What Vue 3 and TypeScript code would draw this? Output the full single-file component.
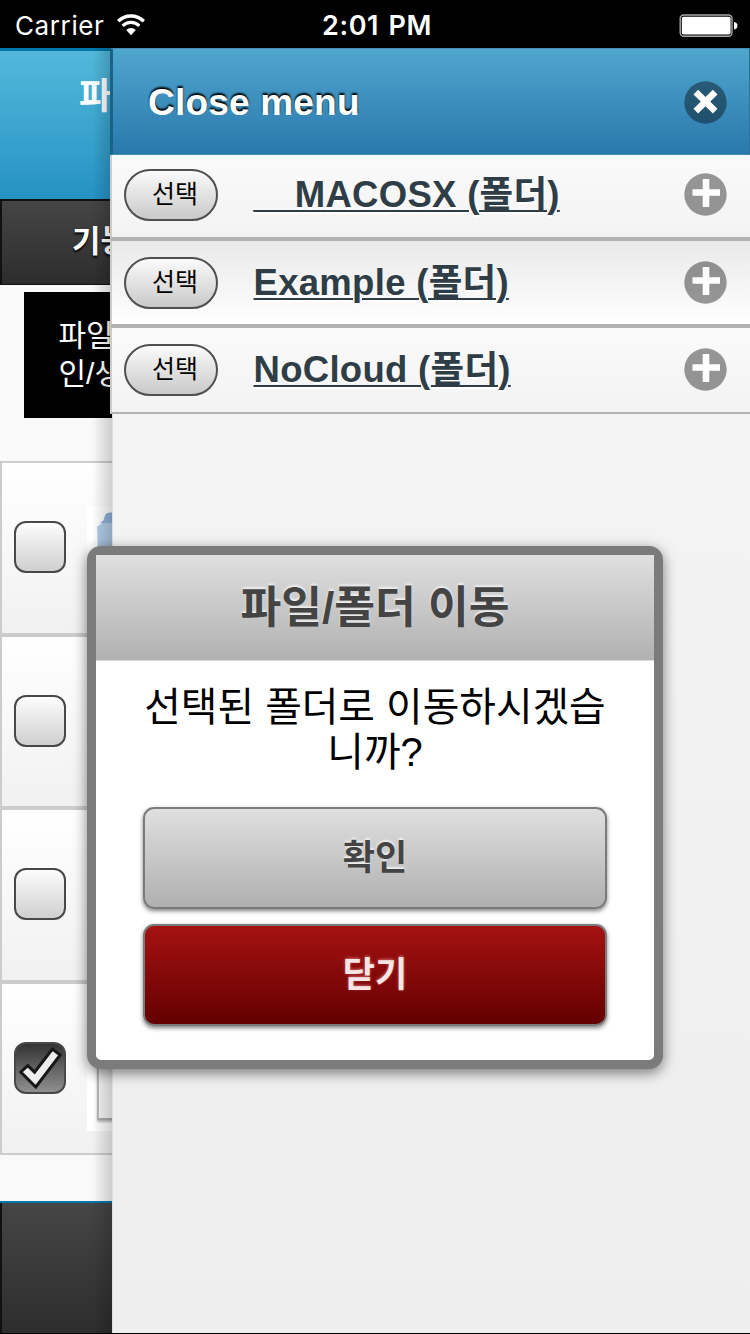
<script setup lang="ts">
interface Folder { name: string; alt: boolean }
interface FileRow { id: number; checked: boolean; thumb: 'cloud' | 'doc' | 'none' }

const folders: Folder[] = [
  { name: '__MACOSX (폴더)', alt: false },
  { name: 'Example (폴더)', alt: true },
  { name: 'NoCloud (폴더)', alt: false },
]
const files: FileRow[] = [
  { id: 1, checked: false, thumb: 'cloud' },
  { id: 2, checked: false, thumb: 'none' },
  { id: 3, checked: false, thumb: 'none' },
  { id: 4, checked: true, thumb: 'doc' },
]
</script>

<template>
  <div class="screen">
    <div class="status">
      <div class="carrier">
        <span class="carrier-name">Carrier</span>
        <svg class="wifi" width="30" height="22" viewBox="0 0 30 22" fill="none">
          <path d="M2.2 7.2 A18.2 18.2 0 0 1 27.8 7.2" stroke="#fff" stroke-width="3.4" />
          <path d="M6.7 11.8 A11.8 11.8 0 0 1 23.3 11.8" stroke="#fff" stroke-width="3.2" />
          <path d="M15 21.2 L10.2 16.1 A6.8 6.8 0 0 1 19.8 16.1 Z" fill="#fff" />
        </svg>
      </div>
      <span class="time">2:01 PM</span>
      <svg class="battery" width="60" height="24" viewBox="0 0 60 24">
        <rect x="1.2" y="1" width="51.8" height="21.2" rx="3.5" fill="none" stroke="#aaa" stroke-width="1.4" />
        <rect x="2.8" y="2.8" width="48.8" height="17.6" rx="1.6" fill="#fff" />
        <path d="M55 8 Q58.5 8.6 58.5 11.7 Q58.5 14.8 55 15.6 Z" fill="#fff" />
      </svg>
    </div>

    <div class="body">
      <div class="under">
        <div class="app-head"><span>파일</span></div>
        <div class="nav"><span>기능</span></div>
        <div class="tip"><span>파일</span><span>인/생성</span></div>
        <div class="files">
          <div v-for="f in files" :key="f.id" class="file">
            <div class="check" :class="{ on: f.checked }">
              <svg v-if="f.checked" width="48" height="48" viewBox="0 0 48 48">
                <path d="M4.8 28 L11.8 21.6 L18.6 28.2 L36.4 5 L44.2 11 L19.8 43 Z" fill="#eee" stroke="#181818" stroke-width="3" />
              </svg>
            </div>
            <div v-if="f.thumb !== 'none'" class="thumb" :class="f.thumb">
              <svg v-if="f.thumb === 'cloud'" width="26" height="80" viewBox="0 0 26 80">
                <path d="M10 20.5 L15.5 17 L18.5 8.5 Q19.5 6.5 26 6.5 V80 H12 Z" fill="#b1cce8" />
                <path d="M12.5 17 L16.5 14.5 L18.5 8.5 Q19.5 6.5 26 6.5 V17 H12.5 Z" fill="#8fb2da" />
              </svg>
              <div v-else class="paper"></div>
            </div>
          </div>
        </div>
        <div class="foot"></div>
      </div>

      <div class="panel">
        <div class="panel-head">
          <span>Close menu</span>
          <svg width="43" height="43" viewBox="0 0 43 43">
            <circle cx="21.5" cy="21.5" r="21.2" fill="#000" fill-opacity=".4" />
            <path d="M11.8 11.2 L31.2 30.2 M31.2 11.2 L11.8 30.2" stroke="#fff" stroke-width="6.6" />
          </svg>
        </div>
        <div v-for="f in folders" :key="f.name" class="folder" :class="{ alt: f.alt }">
          <button class="pick">선택</button>
          <a class="name">{{ f.name }}</a>
          <svg width="43" height="43" viewBox="0 0 43 43">
            <circle cx="21.5" cy="21.5" r="21.2" fill="#000" fill-opacity=".4" />
            <path d="M8.5 19.5 H36 M22 6 V34" stroke="#fff" stroke-width="6.6" />
          </svg>
        </div>
      </div>
    </div>

    <div class="modal">
      <div class="modal-title"><span>파일/폴더 이동</span></div>
      <div class="modal-body">
        <p>선택된 폴더로 이동하시겠습<br>니까?</p>
        <button class="btn"><span>확인</span></button>
        <button class="btn red"><span>닫기</span></button>
      </div>
    </div>
  </div>
</template>

<style>
body { margin: 0; background: #000; }
</style>

<style scoped>
* { box-sizing: border-box; }
.screen {
  position: relative; width: 750px; height: 1334px; overflow: hidden; background: #000;
  display: flex; flex-direction: column;
  font-family: "Liberation Sans", "Noto Sans CJK KR", sans-serif;
}
button { font-family: inherit; margin: 0; padding: 0; }
.status {
  height: 48px; flex: none; display: grid; grid-template-columns: 1fr auto 1fr; align-items: center;
  padding: 2px 11px 0 15px; color: #fff; font-family: Inter, Roboto, sans-serif; font-size: 26px;
}
.carrier { display: flex; align-items: center; gap: 12px; }
.carrier-name { font-weight: 400; letter-spacing: .6px; }
.time { font-weight: 600; font-size: 27px; letter-spacing: .6px; word-spacing: 2px; }
.battery { justify-self: end; margin-top: 2px; }

.body { height: 1285px; flex: none; display: flex; }
.under {
  width: 112px; flex: none; overflow: hidden; background: #f9f9f9; position: relative;
  display: flex; flex-direction: column;
}
.under::after {
  content: ""; position: absolute; top: 0; right: 0; bottom: 0; width: 20px;
  background: linear-gradient(90deg, rgba(0,0,0,0), rgba(0,0,0,.07) 40%, rgba(0,0,0,.18));
}
.app-head {
  height: 151px; flex: none; border-top: 3px solid #0076aa;
  background: linear-gradient(#53b8da, #2592c5); padding: 22px 0 0 79px;
  white-space: nowrap; color: #fff; font-weight: 700; font-size: 36px; line-height: 48px;
}
.nav {
  height: 86px; flex: none; border: 2px solid #111; border-bottom: 1px solid #111; border-right: 0;
  background: linear-gradient(#454545, #2d2d2d); padding: 18px 0 0 70px; white-space: nowrap;
  color: #fff; font-weight: 700; font-size: 31px; line-height: 46px; text-shadow: 0 2px 2px #000;
}
.tip {
  margin: 7px 0 0 23.5px; width: 400px; height: 126px; flex: none; background: #000; color: #fff;
  padding: 25px 0 0 35px; display: flex; flex-direction: column; font-size: 30px; line-height: 38px;
}
.files { margin-top: 43px; flex: none; width: 400px; }
.file {
  height: 173.5px; border: 2px solid #ccc; background: linear-gradient(#fff, #f1f1f1);
  display: flex; align-items: center; padding: 0 0 1px 12px;
}
.check {
  width: 52px; height: 52px; flex: none; border: 2px solid #484848; border-radius: 12px;
  background: linear-gradient(#fdfdfd, #cfcfcf);
}
.check.on { background: linear-gradient(#333, #909090); }
.check svg { display: block; }
.thumb { width: 200px; height: 80px; margin-left: 21px; background: #fff; align-self: flex-start; margin-top: 43px; }
.thumb.doc { height: 104px; padding-left: 10px; }
.paper {
  height: 93px; width: 150px; background: #f5f5f5; border: 2px solid #bbb;
  box-shadow: 0 2px 2px #bbb; border-bottom-color: #aaa;
}
.foot { margin-top: 46px; height: 132px; flex: none; border-top: 2px solid #0076aa; background: linear-gradient(#454545, #2d2d2d); display: flex; }
.foot::before { content: ""; width: 2px; background: #111; }

.panel {
  flex: 1; position: relative; background: linear-gradient(#f6f6f6, #eee); border-left: 1px solid #ddd;
  display: flex; flex-direction: column;
}
.panel-head {
  height: 107px; flex: none; margin-left: -3px; border: 1px solid #458db5; border-left: 3px solid #1b6288; border-right-color: #2a7396;
  background: linear-gradient(#4fa6ce, #2a78ac);
  display: flex; align-items: center; justify-content: space-between; padding: 1px 22px 0 35px;
  color: #fff; font-weight: 700; font-size: 37px; letter-spacing: .2px; text-shadow: 0 -2px 2px #000;
}
.panel-head span { padding-top: 2px; }
.folder {
  height: 87.3px; flex: none; margin-left: -3px; border: 2px solid #b2b2b2; border-width: 2px 0 2px 2px; border-left-color: #ccc;
  background: linear-gradient(#fafafa, #f3f3f3);
  display: flex; align-items: center; padding: 0 23px 0 12px;
}
.folder:nth-child(2) { border-top: 0; height: 84px; padding-bottom: 3px; }
.folder.alt { background: linear-gradient(#e9e9e9, #fff); }
.pick {
  width: 94px; height: 52px; border: 2px solid #505050; border-radius: 26px; background: linear-gradient(#fbfbfb, #c9c9c9);
  color: #000; font-size: 25px; line-height: 34px; padding: 0 0 2px 8px; white-space: nowrap;
}
.name {
  flex: 1; margin-left: 35.5px; color: #2f3e46; font-weight: 700; font-size: 36.5px; letter-spacing: .3px; line-height: 46px; white-space: nowrap; padding-top: 1px;
  text-decoration: underline; text-decoration-thickness: 2px; text-underline-offset: 3px; text-shadow: 0 2px 0 #fff;
}

.modal {
  position: absolute; left: 87px; top: 546px; width: 576px; height: 523px;
  border: 9px solid #7b7b7b; border-radius: 14px; background: #fff;
  box-shadow: 0 4px 14px rgba(0,0,0,.5);
}
.modal-title {
  height: 106px; background: linear-gradient(#dfdfdf, #b1b1b1); border-bottom: 1px solid #ddd;
  display: flex; justify-content: center; padding-top: 22px;
  color: #444; font-weight: 700; font-size: 44.3px; line-height: 62px; text-shadow: 0 -2px 2px #eee;
}
.modal-body { padding: 24px 47px; display: flex; flex-direction: column; }
p { margin: 0 -10px 31.5px; text-align: center; font-size: 39.8px; line-height: 45px; color: #000; white-space: nowrap; }
.btn {
  height: 102px; flex: none; border: 2px solid #7b7b7b; border-radius: 11px; margin-bottom: 15px;
  background: linear-gradient(#dfdfdf, #b0b0b0); box-shadow: 0 2px 4px rgba(0,0,0,.5);
  color: #444; font-weight: 700; font-size: 35px; line-height: 50px; text-shadow: 0 -2px 2px #eee; padding-bottom: 0;
}
.btn.red { background: linear-gradient(#a51212, #640000); color: #f8e4e4; text-shadow: 0 -1px 3px #c66; }
</style>
